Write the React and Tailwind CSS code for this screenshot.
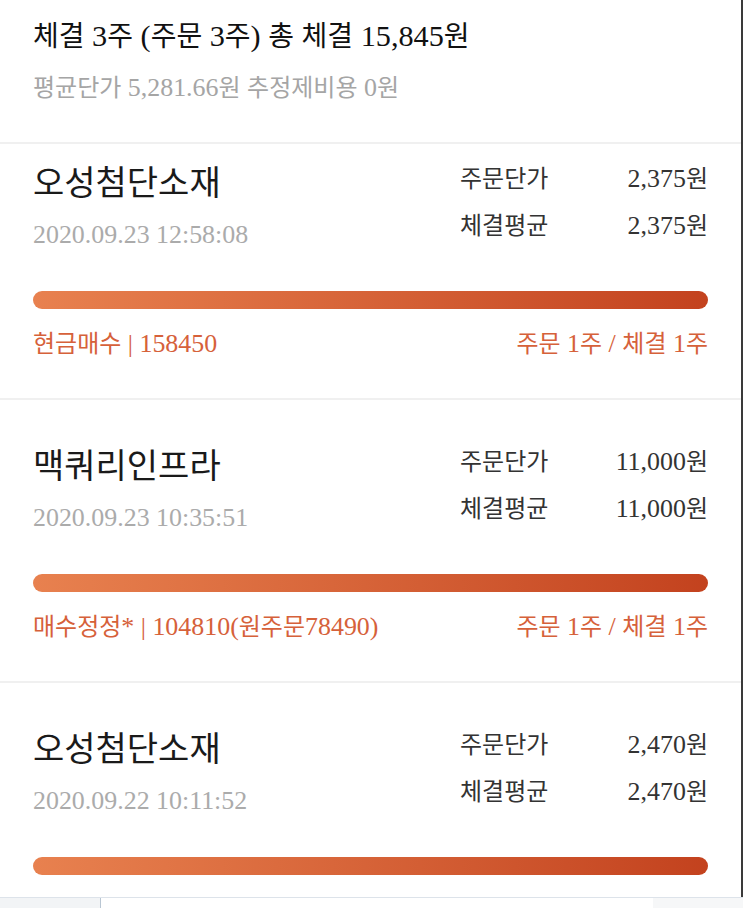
const FONT = { fontFamily: '"Liberation Serif", "Noto Sans CJK KR", serif' };

function T({ children }) {
  const parts = String(children).split(/([\uAC00-\uD7A3\u3131-\u318E]+)/);
  return (
    <>
      {parts.map((p, i) =>
        p === "" ? null : /[\uAC00-\uD7A3\u3131-\u318E]/.test(p) ? (
          <span key={i}>{p}</span>
        ) : (
          <span key={i} className="text-[1.08em]">{p}</span>
        )
      )}
    </>
  );
}

const cards = [
  {
    name: "오성첨단소재",
    date: "2020.09.23 12:58:08",
    order: "2,375원",
    avg: "2,375원",
    left: "현금매수 | 158450",
    right: "주문 1주 / 체결 1주",
    first: true,
  },
  {
    name: "맥쿼리인프라",
    date: "2020.09.23 10:35:51",
    order: "11,000원",
    avg: "11,000원",
    left: "매수정정* | 104810(원주문78490)",
    right: "주문 1주 / 체결 1주",
  },
  {
    name: "오성첨단소재",
    date: "2020.09.22 10:11:52",
    order: "2,470원",
    avg: "2,470원",
    left: null,
  },
];

function Card({ c }) {
  return (
    <div
      className={`px-[33px] ${c.first ? "pt-[19px]" : "pt-[46px]"} ${
        c.left ? "pb-[38px] border-b-2 border-[#f0f0f0]" : "pb-[20px]"
      }`}
    >
      <div className="flex items-start justify-between">
        <div className="flex flex-col">
          <div className="text-[34px] leading-[42px] text-[#1a1a1a]">{c.name}</div>
          <div className="mt-[14px] text-[24px] leading-[32px] text-[#ababab]">
            <T>{c.date}</T>
          </div>
        </div>
        <div className="w-[248px] grid grid-cols-[auto_1fr] gap-y-[15px] text-[24px] leading-[32px] text-[#333]">
          <div>주문단가</div>
          <div className="text-right"><T>{c.order}</T></div>
          <div>체결평균</div>
          <div className="text-right"><T>{c.avg}</T></div>
        </div>
      </div>
      <div className="mt-[40px] h-[18px] rounded-full bg-gradient-to-r from-[#e8814f] to-[#c3421e]" />
      {c.left && (
        <div className="mt-[19px] flex justify-between text-[24px] leading-[32px] text-[#d6613a]">
          <div><T>{c.left}</T></div>
          <div><T>{c.right}</T></div>
        </div>
      )}
    </div>
  );
}

export default function App() {
  return (
    <div style={FONT} className="w-[743px] h-[908px] bg-white overflow-hidden flex flex-col">
      <div className="flex-1 flex border-r-2 border-[#3a3a3a] min-h-0">
        <div className="flex-1 flex flex-col">
          <div className="h-[144px] border-b-2 border-[#f0f0f0] px-[33px] pt-[16px]">
            <div className="text-[28px] leading-[40px] text-[#111]">
              <T>체결 3주 (주문 3주) 총 체결 15,845원</T>
            </div>
            <div className="mt-[15px] text-[24px] leading-[32px] text-[#a5a5a5]">
              <T>평균단가 5,281.66원 추정제비용 0원</T>
            </div>
          </div>
          <div className="flex flex-col">
            {cards.map((c, i) => (
              <Card key={i} c={c} />
            ))}
          </div>
        </div>
      </div>
      <div className="h-[11px] flex border-t border-[#dde3ea]">
        <div className="w-[101px] bg-[#f2f4f6] border-r border-[#b9c6d3]" />
        <div className="flex-1 bg-white" />
        <div className="w-[90px] bg-[#f6f7f8]" />
      </div>
    </div>
  );
}
